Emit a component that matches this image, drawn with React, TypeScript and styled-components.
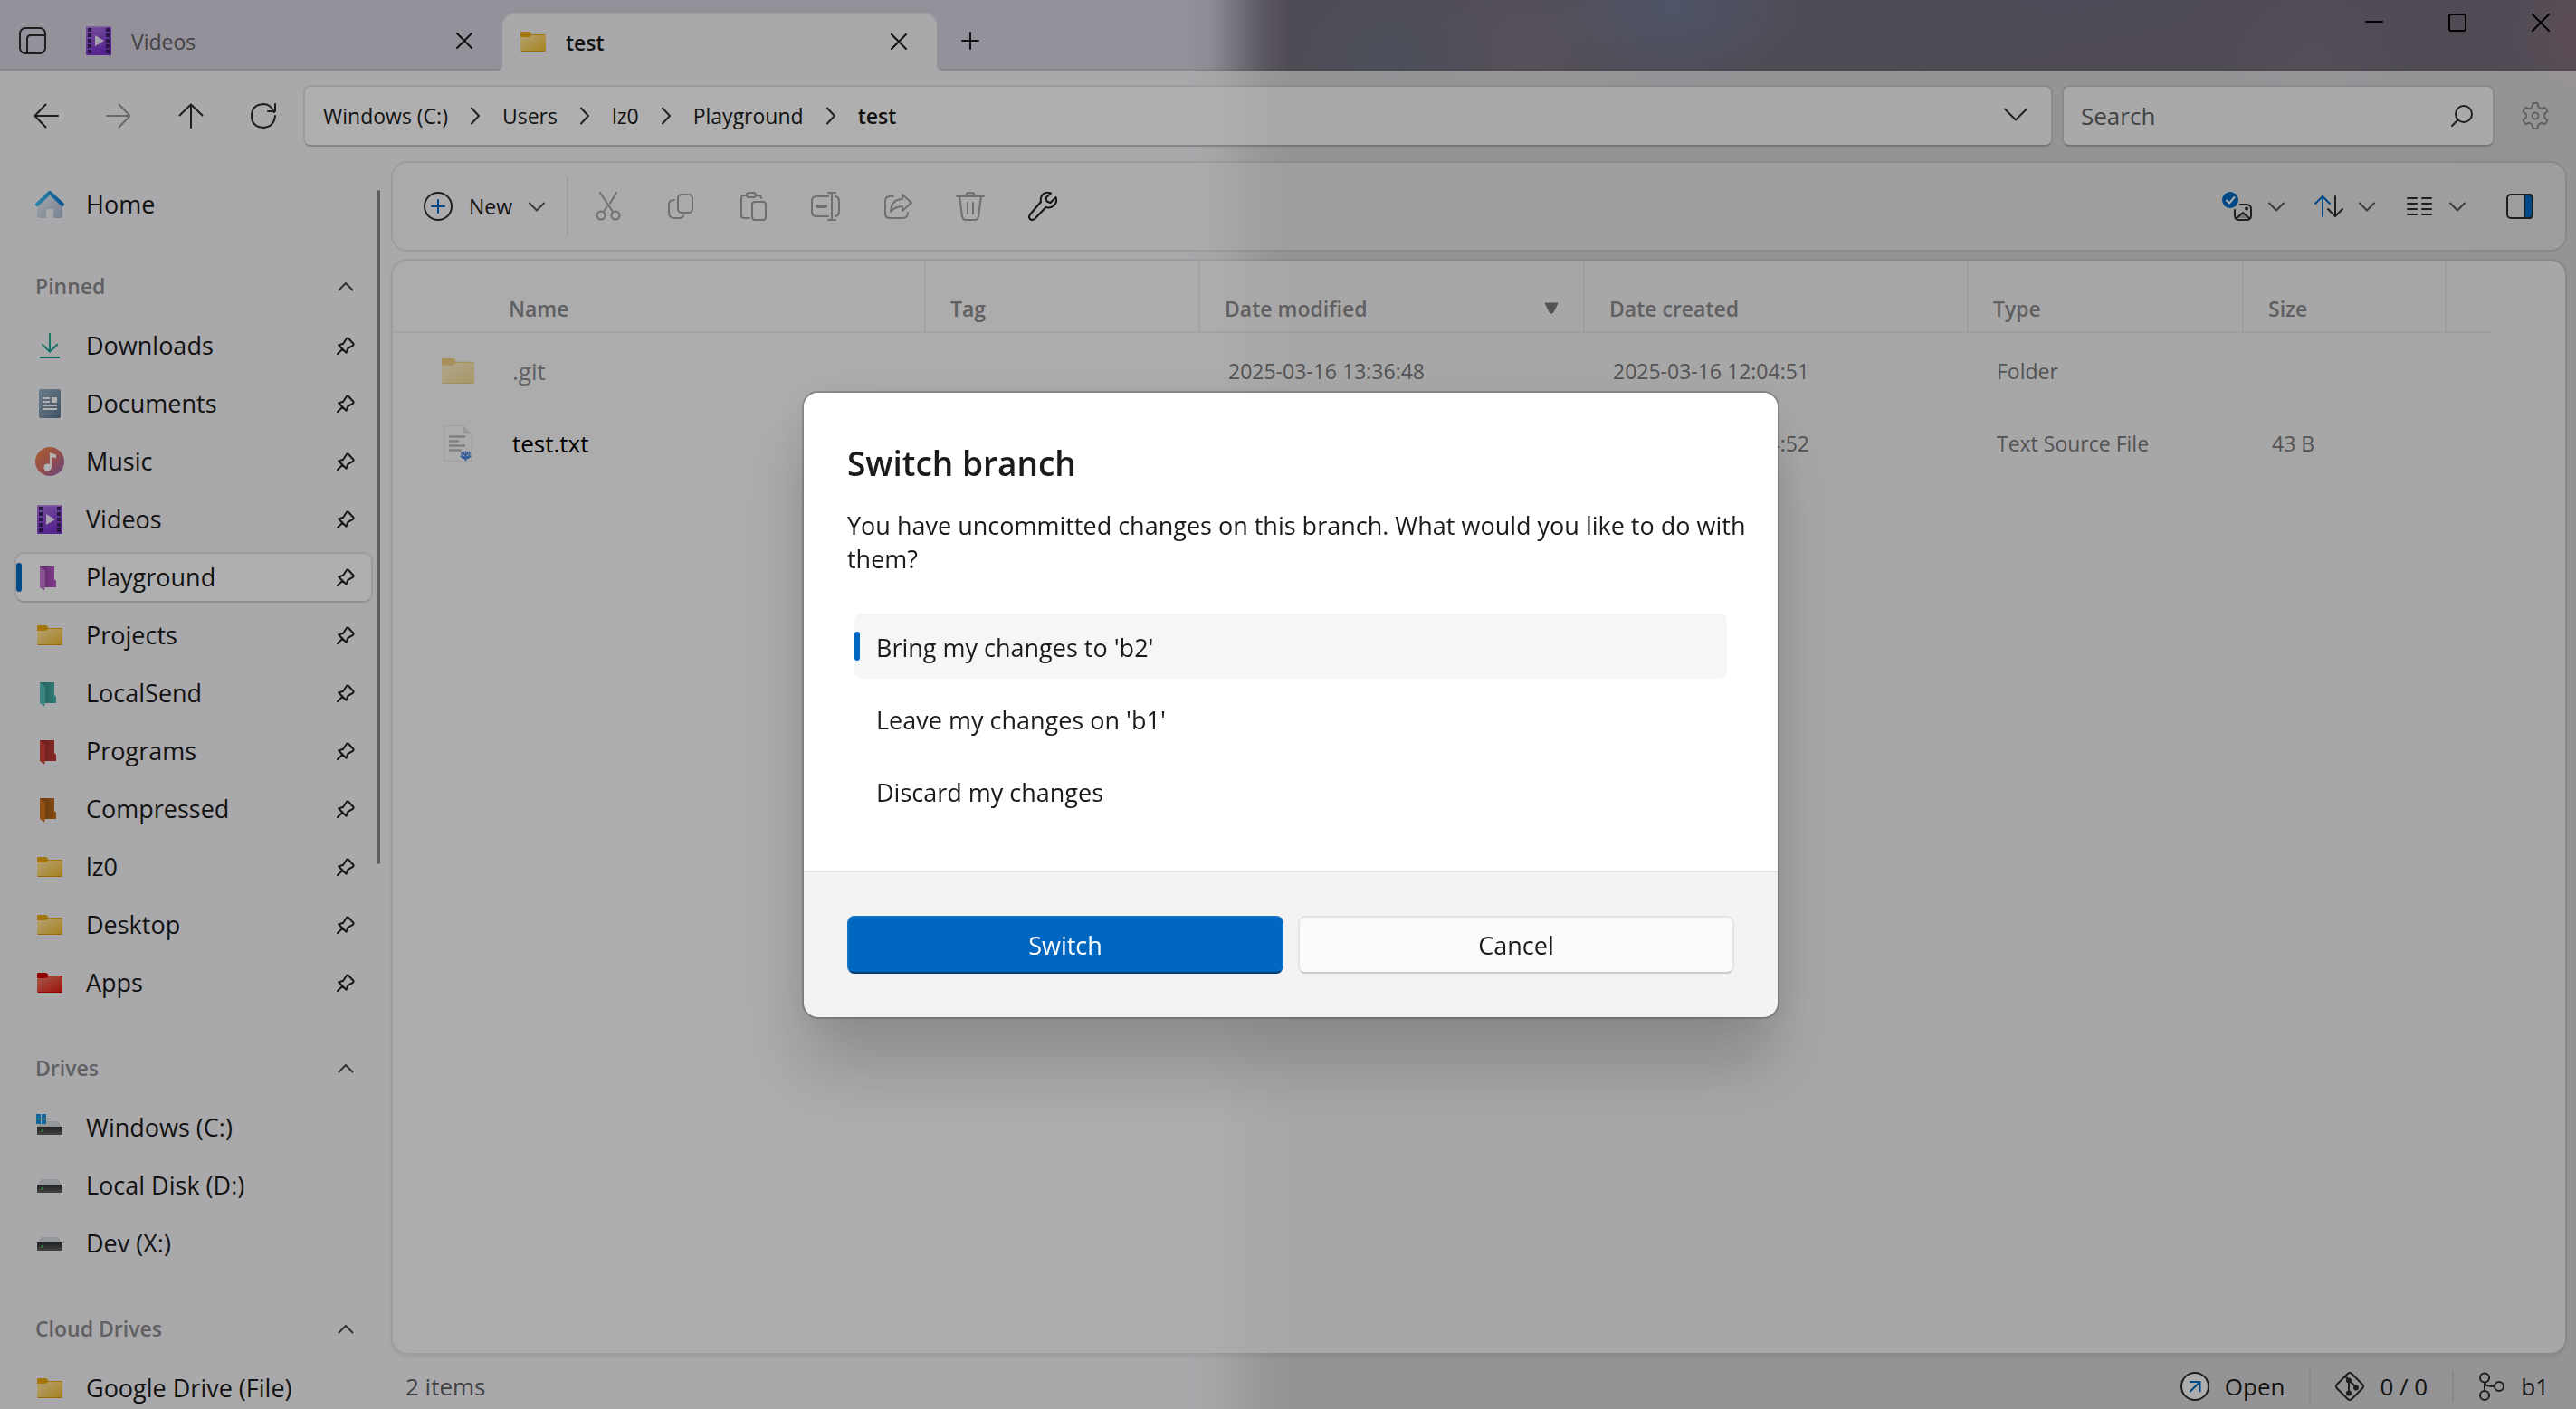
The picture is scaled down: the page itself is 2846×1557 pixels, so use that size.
import React from "react";
import styled, { createGlobalStyle, css } from "styled-components";

const color = {
  text: "#1b1b1b",
  secondary: "#5f5f61",
  tertiary: "#8a8a8d",
  accent: "#0067c0",
  stroke: "rgba(0, 0, 0, 0.07)",
  strokeStrong: "rgba(0, 0, 0, 0.2)",
};

const GlobalStyle = createGlobalStyle`
  *, *::before, *::after { box-sizing: border-box; }
  body { margin: 0; overflow: hidden; }
  body, button, input { font-family: "Open Sans", "Noto Sans", sans-serif; color: ${color.text}; }
  button { border: 0; background: none; padding: 0; margin: 0; cursor: default; }
`;

/* ---------- window frame ---------- */

const Window = styled.div`
  height: 100vh;
  display: flex;
  flex-direction: column;
  overflow: hidden;
  background:
    radial-gradient(ellipse 110px 90px at 1535px 64px, rgba(103, 121, 138, 0.5), transparent),
    radial-gradient(ellipse 140px 110px at 1690px 50px, rgba(131, 123, 138, 0.6), transparent),
    radial-gradient(ellipse 150px 90px at 1848px 8px, rgba(112, 126, 160, 0.75), transparent),
    radial-gradient(ellipse 260px 70px at 2270px 0, rgba(112, 112, 140, 0.4), transparent),
    radial-gradient(ellipse 100px 90px at 2556px 70px, rgba(132, 117, 134, 0.5), transparent),
    radial-gradient(ellipse 90px 120px at 100% 40px, rgba(140, 112, 126, 0.7), transparent),
    linear-gradient(90deg, #d4d0de 0, #d4d0de 46%, #cbc7d4 47%, #857f8c 49%, #736d7a 50%, #716b79 100%);
`;

const TitleBar = styled.header`
  height: 78px;
  display: flex;
  align-items: flex-end;
`;

const barEdge = css`
  border-bottom: 2px solid ${color.stroke};
`;

const TabMenuButton = styled.button`
  ${barEdge}
  width: 75px;
  height: 100%;
  display: flex;
  align-items: center;
  justify-content: center;
  padding: 14px 3px 0 0;
`;

const Tab = styled.div<{ $active?: boolean }>`
  position: relative;
  width: 480px;
  height: 64px;
  padding: 0 18px 0 20px;
  display: flex;
  align-items: center;
  gap: 22px;
  font-size: 23px;
  color: ${(p) => (p.$active ? color.text : color.secondary)};
  font-weight: ${(p) => (p.$active ? 600 : 400)};
  ${(p) =>
    p.$active
      ? css`
          background: rgba(255, 255, 255, 0.7);
          border-radius: 14px 14px 0 0;
          box-shadow: inset 0 2px 0 rgba(0, 0, 0, 0.05);
          &::before,
          &::after {
            content: "";
            position: absolute;
            bottom: 0;
            width: 6px;
            height: 6px;
          }
          &::before {
            right: 100%;
            background: radial-gradient(circle at 0 0, transparent 6px, rgba(255, 255, 255, 0.7) 6px);
          }
          &::after {
            left: 100%;
            background: radial-gradient(circle at 100% 0, transparent 6px, rgba(255, 255, 255, 0.7) 6px);
          }
        `
      : barEdge}
`;

const TabLabel = styled.span`
  flex: 1;
  padding-top: 2px;
`;

const TabClose = styled.button`
  width: 48px;
  height: 40px;
  display: flex;
  align-items: center;
  justify-content: center;
`;

const NewTabButton = styled.button`
  ${barEdge}
  width: 74px;
  height: 64px;
  display: flex;
  align-items: center;
  justify-content: center;
`;

const Caption = styled.div`
  ${barEdge}
  flex: 1;
  height: 100%;
  display: flex;
  justify-content: flex-end;
  align-items: flex-start;
  gap: 72px;
  padding: 15px 29px 0 0;
  button { display: flex; }
`;

const Body = styled.div`
  flex: 1;
  min-height: 0;
  display: flex;
  flex-direction: column;
  background: rgba(255, 255, 255, 0.7);
`;

/* ---------- navigation bar ---------- */

const NavBar = styled.div`
  height: 100px;
  padding-left: 11px;
  display: flex;
  align-items: center;
`;

const NavButton = styled.button<{ $wide?: boolean }>`
  width: ${(p) => (p.$wide ? 90 : 80)}px;
  height: 68px;
  display: flex;
  align-items: center;
  justify-content: center;
`;

const fieldBox = css`
  height: 68px;
  display: flex;
  align-items: center;
  background: rgba(255, 255, 255, 0.7);
  background-clip: padding-box;
  border: 2px solid ${color.stroke};
  border-bottom-color: ${color.strokeStrong};
  border-radius: 8px;
`;

const AddressBar = styled.nav`
  ${fieldBox}
  flex: 1;
  margin: 0 10px 0 4px;
  padding: 0 26px 0 20px;
  gap: 24px;
`;

const Crumb = styled.button<{ $current?: boolean }>`
  font-size: 23px;
  font-weight: ${(p) => (p.$current ? 600 : 400)};
`;

const Spacer = styled.span`
  flex: 1;
`;

const SearchBox = styled.label`
  ${fieldBox}
  width: 478px;
  padding: 0 22px 0 19px;
  svg { flex: none; }
`;

const SearchInput = styled.input`
  flex: 1;
  min-width: 0;
  border: 0;
  outline: 0;
  padding: 0;
  background: none;
  font-size: 26px;
  &::placeholder { color: ${color.secondary}; opacity: 1; }
`;

/* ---------- sidebar ---------- */

const Columns = styled.div`
  flex: 1;
  min-height: 0;
  display: flex;
`;

const Sidebar = styled.aside`
  width: 432px;
  padding: 0 12px 0 16px;
  display: flex;
  gap: 4px;
  overflow: hidden;
`;

const SideList = styled.nav`
  flex: 1;
  display: flex;
  flex-direction: column;
  padding-top: 16px;
`;

const ScrollThumb = styled.div`
  width: 4px;
  height: 54%;
  margin-top: 32px;
  border-radius: 2px;
  background: #87878a;
`;

const Group = styled.section`
  display: flex;
  flex-direction: column;
  padding-bottom: 4px;
`;

const GroupHeader = styled.button`
  flex: none;
  height: 68px;
  margin-top: 24px;
  padding: 0 21px 0 23px;
  display: flex;
  align-items: center;
  justify-content: space-between;
  font-size: 23px;
  font-weight: 600;
  color: ${color.tertiary};
`;

const SideItem = styled.a<{ $selected?: boolean }>`
  position: relative;
  flex: none;
  height: 56px;
  margin: 4px 0;
  padding: 0 18px 0 21px;
  display: flex;
  align-items: center;
  gap: 24px;
  font-size: 27px;
  line-height: 36px;
  white-space: nowrap;
  color: ${color.text};
  text-decoration: none;
  border: 2px solid transparent;
  border-radius: 10px;
  svg { flex: none; }
  ${(p) =>
    p.$selected &&
    css`
      background: rgba(255, 255, 255, 0.7);
      background-clip: padding-box;
      border-color: ${color.stroke};
      border-bottom-color: rgba(0, 0, 0, 0.15);
      &::before {
        content: "";
        position: absolute;
        left: 0;
        top: 10px;
        width: 6px;
        height: 32px;
        border-radius: 3px;
        background: ${color.accent};
      }
    `}
`;

const SideLabel = styled.span`
  flex: 1;
`;

/* ---------- toolbar ---------- */

const Main = styled.main`
  flex: 1;
  min-width: 0;
  padding-right: 10px;
  display: flex;
  flex-direction: column;
`;

const Toolbar = styled.div`
  height: 100px;
  display: flex;
  align-items: center;
  padding: 0 10px 0 34px;
  border: 2px solid ${color.stroke};
  border-radius: 18px;
  background: rgba(249, 249, 247, 0.4);
  background-clip: padding-box;
`;

const NewButton = styled.button`
  display: flex;
  align-items: center;
  gap: 18px;
  margin-right: 24px;
  font-size: 23px;
  line-height: 32px;
`;

const Divider = styled.span<{ $tall?: boolean }>`
  width: 2px;
  height: ${(p) => (p.$tall ? 64 : 36)}px;
  background: ${color.stroke};
`;

const ToolGroup = styled.div`
  margin-left: 4px;
  display: flex;
  flex: 1;
`;

const ToolButton = styled.button<{ $off?: boolean }>`
  width: 80px;
  height: 64px;
  display: flex;
  align-items: center;
  justify-content: center;
  opacity: ${(p) => (p.$off ? 0.42 : 1)};
`;

const DropButton = styled.button`
  width: 100px;
  height: 64px;
  padding-right: 20px;
  display: flex;
  align-items: center;
  justify-content: flex-end;
  gap: 17px;
`;

/* ---------- file table ---------- */

const FilePanel = styled.div`
  flex: 1;
  margin-top: 8px;
  padding-right: 82px;
  border: 2px solid ${color.stroke};
  border-radius: 18px;
  background: rgba(249, 249, 248, 0.78);
  background-clip: padding-box;
  box-shadow: 0 3px 4px rgba(0, 0, 0, 0.06);
`;

const FileTable = styled.table`
  width: 100%;
  border-collapse: separate;
  border-spacing: 0;
  table-layout: fixed;
`;

const HeadCell = styled.th<{ $name?: boolean; $last?: boolean }>`
  height: 80px;
  padding: 27px 26px 0 ${(p) => (p.$name ? 128 : 27)}px;
  border-bottom: 2px solid rgba(0, 0, 0, 0.05);
  border-right: ${(p) => (p.$last ? "0" : "2px solid rgba(0, 0, 0, 0.05)")};
  font-size: 23px;
  line-height: 30px;
  font-weight: 600;
  text-align: left;
  color: ${color.tertiary};
`;

const HeadContent = styled.span`
  display: flex;
  align-items: center;
  justify-content: space-between;
`;

const Cell = styled.td`
  height: 80px;
  padding: 4px 0 0 31px;
  font-size: 23px;
  line-height: 30px;
  color: #77777a;
`;

const NameCell = styled(Cell)<{ $hidden?: boolean }>`
  padding-left: 54px;
  font-size: 26px;
  color: ${(p) => (p.$hidden ? color.tertiary : "#000")};
  svg { opacity: ${(p) => (p.$hidden ? 0.5 : 1)}; }
`;

const NameContent = styled.span`
  display: flex;
  align-items: center;
  gap: 42px;
`;

/* ---------- status bar ---------- */

const StatusBar = styled.footer`
  height: 60px;
  padding: 10px 20px 0 16px;
  display: flex;
  align-items: center;
  font-size: 26px;
`;

const ItemCount = styled.span`
  flex: 1;
  color: ${color.secondary};
`;

const StatusButton = styled.button`
  display: flex;
  align-items: center;
  gap: 17px;
  margin: 0 27px;
  font-size: 26px;
  line-height: 36px;
  &:last-child { margin-right: 8px; }
  &:last-child { margin-right: 0; }
`;

/* ---------- dialog ---------- */

const Smoke = styled.div`
  position: fixed;
  inset: 0;
  display: flex;
  align-items: center;
  justify-content: center;
  padding-left: 6px;
  background: rgba(0, 0, 0, 0.3);
`;

const Dialog = styled.form`
  width: 1076px;
  overflow: hidden;
  border-radius: 16px;
  background: #f3f3f3;
  box-shadow: 0 0 0 2px rgba(60, 60, 60, 0.3), 0 56px 72px rgba(0, 0, 0, 0.18), 0 0 40px rgba(0, 0, 0, 0.06);
`;

const DialogBody = styled.div`
  padding: 50px 32px 52px 48px;
  background: #fff;
  border-bottom: 2px solid #e5e5e5;
`;

const DialogTitle = styled.h1`
  margin: 0 0 22px;
  font-size: 37px;
  line-height: 56px;
  font-weight: 600;
`;

const DialogText = styled.p`
  margin: 0 0 42px;
  font-size: 27px;
  line-height: 37px;
`;

const Choices = styled.fieldset`
  margin: 0;
  padding: 0 24px 0 8px;
  border: 0;
  display: flex;
  flex-direction: column;
  gap: 8px;
`;

const Choice = styled.label`
  height: 72px;
  display: flex;
  align-items: center;
  gap: 18px;
  font-size: 27px;
  border-radius: 8px;
  span { padding-top: 3px; }
  &:has(input:checked) { background: #f6f6f6; }
`;

const ChoiceMark = styled.input`
  appearance: none;
  margin: 0;
  width: 6px;
  height: 32px;
  border-radius: 3px;
  &:checked { background: ${color.accent}; }
`;

const DialogActions = styled.div`
  padding: 48px;
  display: flex;
  gap: 16px;
`;

const ActionButton = styled.button<{ $primary?: boolean }>`
  flex: 1;
  height: 64px;
  padding-top: 2px;
  font-size: 27px;
  border-radius: 8px;
  border: 2px solid ${(p) => (p.$primary ? "#1473c5" : "#e5e5e5")};
  border-bottom-color: ${(p) => (p.$primary ? "#003e73" : "#cccccc")};
  background: ${(p) => (p.$primary ? color.accent : "#fbfbfb")};
  color: ${(p) => (p.$primary ? "#fff" : color.text)};
`;

/* ---------- icons ---------- */

type IconProps = {
  w: number;
  h?: number;
  stroke?: string;
  sw?: number;
  children: React.ReactNode;
};

const Icon = ({ w, h = w, stroke = "#2b2b2d", sw = 2, children }: IconProps) => (
  <svg
    width={w}
    height={h}
    viewBox={`0 0 ${w} ${h}`}
    fill="none"
    stroke={stroke}
    strokeWidth={sw}
    strokeLinecap="round"
    strokeLinejoin="round"
    aria-hidden="true"
  >
    {children}
  </svg>
);

const CloseIcon = ({ size = 18, sw = 2, stroke = "#1b1b1b" }) => (
  <Icon w={size} sw={sw} stroke={stroke}>
    <path d={`M1 1L${size - 1} ${size - 1}M${size - 1} 1L1 ${size - 1}`} />
  </Icon>
);

const ChevronRight = () => (
  <Icon w={12} h={20} stroke="#333"><path d="M2 1.500l8 8.500-8 8.500" /></Icon>
);
const ChevronDown = ({ w = 18, stroke = "#555" }) => (
  <Icon w={w} h={w / 2 + 2} stroke={stroke}><path d={`M1 1.500l${w / 2 - 1} ${w / 2 - 1} ${w / 2 - 1}-${w / 2 - 1}`} /></Icon>
);
const ChevronUp = () => (
  <Icon w={18} h={11} stroke="#4a4a4c" sw={2}><path d="M1.500 9.500L9 2l7.500 7.500" /></Icon>
);

const FolderIcon = ({ w = 28, h = 22, red = false }) => {
  const id = red ? "fold-red" : "fold-yellow";
  return (
    <svg width={w} height={h} viewBox="0 0 28 22" aria-hidden="true" preserveAspectRatio="none">
      <defs>
        <linearGradient id={id} x1="0" y1="0" x2="1" y2="1">
          <stop offset="0" stopColor={red ? "#f0806a" : "#ffe9a6"} />
          <stop offset="1" stopColor={red ? "#e01a10" : "#f2bb2e"} />
        </linearGradient>
      </defs>
      <path d="M0 1q0-1 1-1h8q3 0 3 3h15q1 0 1 1v16H0z" fill={red ? "#cf0a06" : "#e8a90e"} />
      <path d="M0 6h9q2 0 3-2h16v16.500q0 .5-.5.5H.5q-.5 0-.5-.5z" fill={`url(#${id})`} />
      <path d="M.5 21.500h27" stroke={red ? "#c00" : "#d79a10"} />
    </svg>
  );
};

const SideGlyph = ({ children }: { children: React.ReactNode }) => (
  <svg width="32" height="32" viewBox="0 0 32 32" fill="none" aria-hidden="true">{children}</svg>
);

const FilmShape = ({ id }: { id: string }) => (
  <>
    <defs>
      <linearGradient id={id} x1="0" y1="0" x2="0.4" y2="1">
        <stop offset="0" stopColor="#a96fe0" />
        <stop offset="1" stopColor="#7a33cc" />
      </linearGradient>
    </defs>
    <rect x="2" y="0" width="28" height="32" rx="1.500" fill={`url(#${id})`} />
    <path d="M2.500.8h27" stroke="#c79af0" />
    {[2, 8, 14, 20, 26].map((y) => (
      <g key={y} fill="#352060">
        <rect x="4" y={y} width="4" height="4" />
        <rect x="24" y={y} width="4" height="4" />
      </g>
    ))}
    <path d="M12 10v12l10-6z" fill="#f0e8f8" />
  </>
);

const HomeIcon = () => (
  <SideGlyph>
    <defs>
      <linearGradient id="home-roof" x1="0" x2="1"><stop stopColor="#38bdf0" /><stop offset="1" stopColor="#1278cc" /></linearGradient>
      <linearGradient id="home-wall" x1="0" x2="1" y2="1"><stop stopColor="#eff3f8" /><stop offset="1" stopColor="#a9b8cf" /></linearGradient>
    </defs>
    <path d="M2 15L16 3l14 12v13q0 3-3 3h-7v-9q0-1-1-1h-6q-1 0-1 1v9H5q-3 0-3-3z" fill="url(#home-wall)" />
    <path d="M2 16L16 2.800 30 16" stroke="url(#home-roof)" strokeWidth="4" strokeLinecap="round" strokeLinejoin="round" />
  </SideGlyph>
);

const DownloadIcon = () => (
  <SideGlyph>
    <defs>
      <linearGradient id="dl" x1="0" y1="0" x2="1" y2="1"><stop stopColor="#35c48a" /><stop offset="1" stopColor="#0a8f8c" /></linearGradient>
    </defs>
    <path d="M15 2h2v18.500l7-7 1.300 1.400L16 24l-9.300-9.100L8 13.500l7 7z" fill="url(#dl)" />
    <rect x="5" y="28" width="22" height="2" fill="#129b83" />
  </SideGlyph>
);

const DocumentIcon = () => (
  <SideGlyph>
    <defs>
      <linearGradient id="docs" x1="0" y1="0" x2="1" y2="1"><stop stopColor="#9db4c8" /><stop offset="1" stopColor="#5a7690" /></linearGradient>
    </defs>
    <rect x="4" y="0" width="24" height="32" rx="2" fill="url(#docs)" />
    <path d="M8 10h8M8 14h8M8 18h16M8 22h16" stroke="#fff" strokeWidth="2" />
    <rect x="18" y="9" width="6" height="6" fill="#fff" />
  </SideGlyph>
);

const MusicIcon = () => (
  <SideGlyph>
    <defs>
      <linearGradient id="mus" x1="0" y1="0" x2="1" y2="1"><stop stopColor="#ee8a45" /><stop offset="0.5" stopColor="#d8706a" /><stop offset="1" stopColor="#8a62b8" /></linearGradient>
    </defs>
    <circle cx="16" cy="16" r="16" fill="url(#mus)" />
    <path d="M16 6l7 2.500v4L18 11v12h-2z" fill="#fff" />
    <circle cx="13.500" cy="22.500" r="4" fill="#fff" />
  </SideGlyph>
);

const VideoIcon = () => <SideGlyph><FilmShape id="film-side" /></SideGlyph>;
const YellowFolder = () => (
  <svg width="32" height="32" viewBox="-2 -5 32 32" aria-hidden="true"><FolderIcon /></svg>
);
const RedFolder = () => (
  <svg width="32" height="32" viewBox="-2 -5 32 32" aria-hidden="true"><FolderIcon red /></svg>
);

const OpenFolder = ({ dark, mid, light }: { dark: string; mid: string; light: string }) => (
  <SideGlyph>
    <defs>
      <linearGradient id={`of${dark.slice(1)}`} x1="0" x2="1"><stop stopColor={dark} /><stop offset="1" stopColor={mid} /></linearGradient>
    </defs>
    <path d="M5 4h16v14l2 2v7H9z" fill={`url(#of${dark.slice(1)})`} />
    <path d="M5 4l6 4.500V26l-1 4.800L5 27z" fill={light} />
  </SideGlyph>
);

const DriveIcon = ({ system = false }) => (
  <SideGlyph>
    <defs>
      <linearGradient id="drv" x1="0" y1="0" x2="0" y2="1"><stop stopColor="#2e2e30" /><stop offset="1" stopColor="#626265" /></linearGradient>
    </defs>
    <path d="M2 15l5-6h18l5 6z" fill="#d5d8dc" />
    <rect x="2" y="15" width="28" height="9" fill="url(#drv)" />
    <circle cx="7.500" cy="19.500" r="1.200" fill="#3ad43a" />
    {system && <path d="M1 1h5v5H1zM7 1h5v5H7zM1 7h5v5H1zM7 7h5v5H7z" fill="#1a92e0" />}
  </SideGlyph>
);

const PinIcon = () => (
  <Icon w={20} stroke="#222" sw={2}>
    <path d="M1 19l5.500-5.500M2.200 9.500l8.300 8.300 1.700-4.600 5.600-3.400q1.600-1 .2-2.600l-4.700-4.900q-1.500-1.500-2.700.2L7.200 7.800z" />
  </Icon>
);

const CutIcon = () => (
  <Icon w={32}><circle cx="8" cy="26" r="4.500" /><circle cx="24" cy="26" r="4.500" /><path d="M7 1l14.500 21.500M25 1l-7 11.500M10.500 22.500l4-6" /></Icon>
);
const CopyIcon = () => (
  <Icon w={32}><rect x="13" y="3" width="16" height="20" rx="4" /><path d="M9 9q-6 0-6 5v9q0 6 6 6h5q5 0 5-3" /></Icon>
);
const PasteIcon = () => (
  <Icon w={32}><path d="M9 4H6q-3 0-3 3v19q0 3 3 3h6M19 4h3q3 0 3 3" /><rect x="9" y="1" width="10" height="5" rx="2.500" /><rect x="15" y="11" width="15" height="20" rx="3" /></Icon>
);
const RenameIcon = () => (
  <Icon w={32}><path d="M19 5H6q-5 0-5 5v12q0 5 5 5h13M27 5q4 1 4 5v12q0 4-4 5M23 1v30M19 1h8M19 31h8" /><path d="M7 16h9" strokeWidth="4" /></Icon>
);
const ShareIcon = () => (
  <Icon w={32}><path d="M11 5H7q-5 0-5 5v14q0 5 5 5h14q6 0 6-6" /><path d="M21 3l10 9-10 9v-5q-8 0-13 6 1-14 13-14z" /></Icon>
);
const TrashIcon = () => (
  <Icon w={32}><path d="M1 5h30M11 5q0-4 5-4t5 4M4 5l3 22q.6 4 4 4h10q3.400 0 4-4l3-22M13 12v12M19 12v12" /></Icon>
);
const WrenchIcon = () => (
  <Icon w={32} stroke="#1b1b1b"><path d="M25 1.500q-6-2-9.500 2-2.500 3-1.500 7.500L2 25q-2 3 0 5t5 0l12.500-13q5 1.500 9-2 4-4 2-9l-6 6-4-1.500-1-4z" /></Icon>
);
const AddIcon = () => (
  <Icon w={32}><circle cx="16" cy="16" r="15" /><path d="M16 9v14M9 16h14" stroke={color.accent} /></Icon>
);
const SelectIcon = () => (
  <Icon w={34} h={32}>
    <path d="M20 14h7q5 0 5 5v7q0 5-5 5h-8q-5 0-5-5v-6" />
    <path d="M16 29l7-6 7 6" fill="#aaa" />
    <circle cx="27" cy="18.500" r="1" />
    <circle cx="9" cy="9" r="9" fill={color.accent} stroke="none" />
    <path d="M5 9.500l3 3 5.500-6.500" stroke="#fff" />
  </Icon>
);
const SortIcon = () => (
  <Icon w={32} h={24}><path d="M9 23V1M1 9l8-8 8 8" stroke={color.accent} /><path d="M23 1v22M15 15l8 8 8-8" /></Icon>
);
const ListIcon = () => (
  <Icon w={30} h={20}><path d="M1 1h10M17 1h10M1 7h10M17 7h10M1 13h10M17 13h10M1 19h10M17 19h10" /></Icon>
);
const PaneIcon = () => (
  <Icon w={30} h={28}><path d="M20 1h5q4 0 4 4v18q0 4-4 4h-5z" fill={color.accent} /><rect x="1" y="1" width="28" height="26" rx="4" /></Icon>
);
const GearIcon = () => (
  <Icon w={30} stroke="#8c8c90">
    <circle cx="15" cy="15" r="3.500" />
    <path d="M12.500 1h5l1 4.500 3 1.700 4.300-1.500 2.700 4.300-3.400 3.300v3.400l3.400 3.300-2.700 4.300-4.300-1.500-3 1.700-1 4.500h-5l-1-4.500-3-1.700-4.300 1.500L1.500 20l3.400-3.300v-3.400L1.500 10l2.700-4.300 4.300 1.500 3-1.700z" />
  </Icon>
);
const SearchIcon = () => (
  <Icon w={24}><circle cx="14" cy="10" r="9" /><path d="M7.500 16.500L1 23" /></Icon>
);
const TextFileIcon = () => (
  <Icon w={36} h={40} stroke="none">
    <path d="M3 .5h21l9 9v30H3z" fill="#f6f6f7" stroke="#e0e2e4" strokeWidth="1" />
    <path d="M24 .5l9 9h-9z" fill="#dcdcde" />
    <path d="M9 12.500h16M9 17.500h9M9 22.500h16M9 27.500h12" stroke="#b4b8ba" strokeWidth="2.400" />
    <path d="M26.500 38.500V29M22 30q0 4.500 4.500 5.500Q31 34.500 31 30M24 29.500q0 3 2.500 3.500M29 29.500q0 2.500-2.500 3.500M21 34q2 2.500 5.500 3M32 34q-2 2.500-5.500 3" stroke="#3f80d8" strokeWidth="1.500" />
  </Icon>
);
const GitIcon = () => (
  <Icon w={32}>
    <path d="M13.500 2.200q2.500-2.400 5 0l11.300 11.300q2.400 2.500 0 5L18.500 29.800q-2.500 2.400-5 0L2.200 18.500q-2.400-2.500 0-5z" />
    <path d="M11 5l4 4M15 9v14M15 9l8 8" />
    <g fill="#2b2b2d"><circle cx="15" cy="9.500" r="2" /><circle cx="15" cy="23.500" r="2" /><circle cx="23" cy="17.500" r="2" /></g>
  </Icon>
);
const BranchIcon = () => (
  <Icon w={30} h={32}><circle cx="7" cy="6.500" r="5" /><circle cx="7" cy="26" r="5" /><circle cx="23" cy="16" r="5" /><path d="M7 12v9M7 12q1 3.500 6 3.800l5 .2" /></Icon>
);
const OpenIcon = () => (
  <Icon w={32}><circle cx="16" cy="16" r="15" fill="#f8f8f8" /><path d="M11 21.500L21.500 11M11 11h10.500v10.500" stroke={color.accent} /></Icon>
);

/* ---------- data ---------- */

type Place = { name: string; icon: React.ReactNode; selected?: boolean; pin?: boolean };

const pinned: Place[] = [
  { name: "Downloads", icon: <DownloadIcon /> },
  { name: "Documents", icon: <DocumentIcon /> },
  { name: "Music", icon: <MusicIcon /> },
  { name: "Videos", icon: <VideoIcon /> },
  { name: "Playground", icon: <OpenFolder dark="#8a3a9c" mid="#bb55c8" light="#c078cc" />, selected: true },
  { name: "Projects", icon: <YellowFolder /> },
  { name: "LocalSend", icon: <OpenFolder dark="#35877f" mid="#42b5ae" light="#56bdbb" /> },
  { name: "Programs", icon: <OpenFolder dark="#92302c" mid="#c43a34" light="#d04038" /> },
  { name: "Compressed", icon: <OpenFolder dark="#8f5018" mid="#c46c18" light="#cc741c" /> },
  { name: "lz0", icon: <YellowFolder /> },
  { name: "Desktop", icon: <YellowFolder /> },
  { name: "Apps", icon: <RedFolder /> },
].map((p) => ({ ...p, pin: true }));

const groups: { title: string; places: Place[] }[] = [
  { title: "Pinned", places: pinned },
  {
    title: "Drives",
    places: [
      { name: "Windows (C:)", icon: <DriveIcon system /> },
      { name: "Local Disk (D:)", icon: <DriveIcon /> },
      { name: "Dev (X:)", icon: <DriveIcon /> },
    ],
  },
  { title: "Cloud Drives", places: [{ name: "Google Drive (File)", icon: <YellowFolder /> }] },
];

const crumbs = ["Windows (C:)", "Users", "lz0", "Playground", "test"];

const tools = [
  { name: "Cut", icon: <CutIcon />, off: true },
  { name: "Copy", icon: <CopyIcon />, off: true },
  { name: "Paste", icon: <PasteIcon />, off: true },
  { name: "Rename", icon: <RenameIcon />, off: true },
  { name: "Share", icon: <ShareIcon />, off: true },
  { name: "Delete", icon: <TrashIcon />, off: true },
  { name: "Properties", icon: <WrenchIcon />, off: false },
];

const columns = [
  { title: "Name", width: 589 },
  { title: "Tag", width: 303 },
  { title: "Date modified", width: 425, sorted: true },
  { title: "Date created", width: 424 },
  { title: "Type", width: 304 },
  { title: "Size", width: 224 },
];

const files = [
  { name: ".git", hidden: true, icon: <FolderIcon w={36} h={28} />, modified: "2025-03-16 13:36:48", created: "2025-03-16 12:04:51", type: "Folder", size: "" },
  { name: "test.txt", hidden: false, icon: <TextFileIcon />, modified: "2025-03-16 13:36:12", created: "2025-03-16 12:04:52", type: "Text Source File", size: "43 B" },
];

const choices = ["Bring my changes to 'b2'", "Leave my changes on 'b1'", "Discard my changes"];

const PlaceLink = ({ place }: { place: Place }) => (
  <SideItem href="#" $selected={place.selected}>
    {place.icon}
    <SideLabel>{place.name}</SideLabel>
    {place.pin && <PinIcon />}
  </SideItem>
);

export default function App() {
  return (
    <>
      <GlobalStyle />
      <Window>
        <TitleBar>
          <TabMenuButton aria-label="Tab actions">
            <Icon w={30}><rect x="1" y="1" width="28" height="28" rx="6" /><path d="M9 28V13q0-4 4-4h16" /></Icon>
          </TabMenuButton>
          <Tab>
            <svg width="28" height="32" viewBox="2 0 28 32" aria-hidden="true"><FilmShape id="film-tab" /></svg>
            <TabLabel>Videos</TabLabel>
            <TabClose aria-label="Close Videos"><CloseIcon /></TabClose>
          </Tab>
          <Tab $active>
            <FolderIcon />
            <TabLabel>test</TabLabel>
            <TabClose aria-label="Close test"><CloseIcon /></TabClose>
          </Tab>
          <NewTabButton aria-label="New tab">
            <Icon w={20} stroke="#1b1b1b"><path d="M10 1v18M1 10h18" /></Icon>
          </NewTabButton>
          <Caption>
            <button aria-label="Minimize"><Icon w={20} stroke="#000"><path d="M1 9h18" /></Icon></button>
            <button aria-label="Maximize"><Icon w={20} stroke="#000"><rect x="1" y="1" width="18" height="18" rx="2" /></Icon></button>
            <button aria-label="Close window"><CloseIcon size={20} stroke="#000" /></button>
          </Caption>
        </TitleBar>
        <Body>
          <NavBar>
            <NavButton aria-label="Back"><Icon w={28}><path d="M27 14H1.500M13.500 1.500L1.500 14l12 12.500" /></Icon></NavButton>
            <NavButton aria-label="Forward"><Icon w={28} stroke="#98989c"><path d="M1 14h25.500M14.500 1.500l12 12.500-12 12.500" /></Icon></NavButton>
            <NavButton aria-label="Up"><Icon w={28}><path d="M14 27V1.500M1.500 13.500L14 1.500l12.500 12" /></Icon></NavButton>
            <NavButton aria-label="Refresh"><Icon w={28}><path d="M26 10Q22 1 14 1 1 2 1 14t13 13q12-1 13-13M27 1v8h-8" /></Icon></NavButton>
            <AddressBar aria-label="Path">
              {crumbs.map((name, i) => (
                <React.Fragment key={name}>
                  {i > 0 && <ChevronRight />}
                  <Crumb $current={i === crumbs.length - 1}>{name}</Crumb>
                </React.Fragment>
              ))}
              <Spacer />
              <button aria-label="Path history"><ChevronDown w={26} stroke="#2b2b2d" /></button>
            </AddressBar>
            <SearchBox>
              <SearchInput type="text" placeholder="Search" aria-label="Search" />
              <SearchIcon />
            </SearchBox>
            <NavButton $wide aria-label="Settings"><GearIcon /></NavButton>
          </NavBar>
          <Columns>
            <Sidebar>
              <SideList aria-label="Places">
                <PlaceLink place={{ name: "Home", icon: <HomeIcon /> }} />
                {groups.map((g) => (
                  <Group key={g.title}>
                    <GroupHeader>{g.title}<ChevronUp /></GroupHeader>
                    {g.places.map((p) => <PlaceLink key={p.name} place={p} />)}
                  </Group>
                ))}
              </SideList>
              <ScrollThumb />
            </Sidebar>
            <Main>
              <Toolbar>
                <NewButton><AddIcon />New<ChevronDown /></NewButton>
                <Divider $tall />
                <ToolGroup>
                  {tools.map((t) => (
                    <ToolButton key={t.name} aria-label={t.name} $off={t.off}>{t.icon}</ToolButton>
                  ))}
                </ToolGroup>
                <DropButton aria-label="Selection"><SelectIcon /><ChevronDown /></DropButton>
                <DropButton aria-label="Sort"><SortIcon /><ChevronDown /></DropButton>
                <DropButton aria-label="Layout"><ListIcon /><ChevronDown /></DropButton>
                <ToolButton aria-label="Toggle details pane"><PaneIcon /></ToolButton>
              </Toolbar>
              <FilePanel>
                <FileTable>
                  <colgroup>
                    {columns.map((c) => <col key={c.title} style={{ width: c.width }} />)}
                    <col />
                  </colgroup>
                  <thead>
                    <tr>
                      {columns.map((c) => (
                        <HeadCell key={c.title} scope="col" $name={c.title === "Name"}>
                          <HeadContent>
                            {c.title}
                            {c.sorted && (
                              <svg width="18" height="14" viewBox="0 0 18 14" aria-hidden="true"><path d="M2 1h14l-5 10q-2 3-4 0z" fill="#77777a" stroke="#77777a" strokeLinejoin="round" strokeWidth="1" /></svg>
                            )}
                          </HeadContent>
                        </HeadCell>
                      ))}
                      <HeadCell as="td" $last />
                    </tr>
                  </thead>
                  <tbody>
                    {files.map((f) => (
                      <tr key={f.name}>
                        <NameCell $hidden={f.hidden}><NameContent>{f.icon}{f.name}</NameContent></NameCell>
                        <Cell />
                        <Cell>{f.modified}</Cell>
                        <Cell>{f.created}</Cell>
                        <Cell>{f.type}</Cell>
                        <Cell>{f.size}</Cell>
                        <Cell />
                      </tr>
                    ))}
                  </tbody>
                </FileTable>
              </FilePanel>
              <StatusBar>
                <ItemCount>2 items</ItemCount>
                <StatusButton><OpenIcon />Open</StatusButton>
                <Divider />
                <StatusButton><GitIcon />0 / 0</StatusButton>
                <Divider />
                <StatusButton><BranchIcon />b1</StatusButton>
              </StatusBar>
            </Main>
          </Columns>
        </Body>
      </Window>
      <Smoke>
        <Dialog role="dialog" aria-labelledby="dialog-title">
          <DialogBody>
            <DialogTitle id="dialog-title">Switch branch</DialogTitle>
            <DialogText>You have uncommitted changes on this branch. What would you like to do with them?</DialogText>
            <Choices>
              {choices.map((c, i) => (
                <Choice key={c}>
                  <ChoiceMark type="radio" name="mode" defaultChecked={i === 0} />
                  <span>{c}</span>
                </Choice>
              ))}
            </Choices>
          </DialogBody>
          <DialogActions>
            <ActionButton type="button" $primary>Switch</ActionButton>
            <ActionButton type="button">Cancel</ActionButton>
          </DialogActions>
        </Dialog>
      </Smoke>
    </>
  );
}
